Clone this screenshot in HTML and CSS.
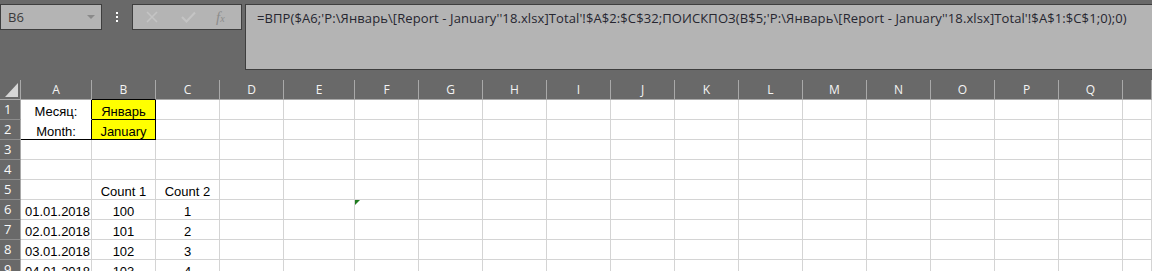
FILE: index.html
```html
<!DOCTYPE html>
<html lang="ru">
<head>
    <meta charset="UTF-8">
    <title>Excel - B6</title>
    <link rel="stylesheet" href="styles.css">
</head>
<body>
    <div class="toolbar">
        <div class="namebox">
            <span>B6</span>
            <span class="arrow"></span>
        </div>
        <div class="dots"><i></i><i></i><i></i></div>
        <div class="fxbox">
            <svg class="ico" width="14" height="12" viewBox="0 0 14 12"><path d="M2 1 L12 11 M12 1 L2 11" stroke="#c4c4c4" stroke-width="1.6" fill="none"/></svg>
            <svg class="ico" width="15" height="12" viewBox="0 0 15 12"><path d="M1 6 L5.5 10.5 L14 1.5" stroke="#c4c4c4" stroke-width="2" fill="none"/></svg>
            <span class="fx">f<sub>x</sub></span>
        </div>
        <div class="formula">=ВПР($A6;'P:\Январь\[Report - January''18.xlsx]Total'!$A$2:$C$32;ПОИСКПОЗ(B$5;'P:\Январь\[Report - January''18.xlsx]Total'!$A$1:$C$1;0);0)</div>
    </div>

    <div class="sheet">
        <div class="row head">
            <div class="corner"><svg width="13" height="14" viewBox="0 0 13 14"><polygon points="13,0 13,14 0,14" fill="#d6d6d6"/></svg></div>
            <div class="ch">A</div><div class="ch top-black">B</div><div class="ch">C</div><div class="ch">D</div><div class="ch">E</div>
            <div class="ch">F</div><div class="ch">G</div><div class="ch">H</div><div class="ch">I</div><div class="ch">J</div><div class="ch">K</div>
            <div class="ch">L</div><div class="ch">M</div><div class="ch">N</div><div class="ch">O</div><div class="ch">P</div><div class="ch">Q</div>
            <div class="ch"></div>
        </div>

        <div class="row">
            <div class="rh">1</div>
            <div class="c center label a1">Месяц:</div>
            <div class="c center month">Январь</div>
            <div class="c"></div><div class="c"></div><div class="c"></div><div class="c"></div><div class="c"></div><div class="c"></div>
            <div class="c"></div><div class="c"></div><div class="c"></div><div class="c"></div><div class="c"></div><div class="c"></div>
            <div class="c"></div><div class="c"></div><div class="c"></div><div class="c"></div>
        </div>
        <div class="row">
            <div class="rh">2</div>
            <div class="c center label a2">Month:</div>
            <div class="c center month">January</div>
            <div class="c"></div><div class="c"></div><div class="c"></div><div class="c"></div><div class="c"></div><div class="c"></div>
            <div class="c"></div><div class="c"></div><div class="c"></div><div class="c"></div><div class="c"></div><div class="c"></div>
            <div class="c"></div><div class="c"></div><div class="c"></div><div class="c"></div>
        </div>
        <div class="row">
            <div class="rh">3</div>
            <div class="c"></div><div class="c"></div><div class="c"></div><div class="c"></div><div class="c"></div><div class="c"></div>
            <div class="c"></div><div class="c"></div><div class="c"></div><div class="c"></div><div class="c"></div><div class="c"></div>
            <div class="c"></div><div class="c"></div><div class="c"></div><div class="c"></div><div class="c"></div><div class="c"></div>
        </div>
        <div class="row">
            <div class="rh">4</div>
            <div class="c"></div><div class="c"></div><div class="c"></div><div class="c"></div><div class="c"></div><div class="c"></div>
            <div class="c"></div><div class="c"></div><div class="c"></div><div class="c"></div><div class="c"></div><div class="c"></div>
            <div class="c"></div><div class="c"></div><div class="c"></div><div class="c"></div><div class="c"></div><div class="c"></div>
        </div>
        <div class="row">
            <div class="rh">5</div>
            <div class="c"></div>
            <div class="c center">Count 1</div>
            <div class="c center">Count 2</div>
            <div class="c"></div><div class="c"></div><div class="c"></div><div class="c"></div><div class="c"></div>
            <div class="c"></div><div class="c"></div><div class="c"></div><div class="c"></div><div class="c"></div><div class="c"></div>
            <div class="c"></div><div class="c"></div><div class="c"></div><div class="c"></div>
        </div>
        <div class="row">
            <div class="rh">6</div>
            <div class="c">01.01.2018</div>
            <div class="c center">100</div>
            <div class="c center">1</div>
            <div class="c"></div><div class="c"></div><div class="c flag"></div><div class="c"></div><div class="c"></div>
            <div class="c"></div><div class="c"></div><div class="c"></div><div class="c"></div><div class="c"></div><div class="c"></div>
            <div class="c"></div><div class="c"></div><div class="c"></div><div class="c"></div>
        </div>
        <div class="row">
            <div class="rh">7</div>
            <div class="c">02.01.2018</div>
            <div class="c center">101</div>
            <div class="c center">2</div>
            <div class="c"></div><div class="c"></div><div class="c"></div><div class="c"></div><div class="c"></div>
            <div class="c"></div><div class="c"></div><div class="c"></div><div class="c"></div><div class="c"></div><div class="c"></div>
            <div class="c"></div><div class="c"></div><div class="c"></div><div class="c"></div>
        </div>
        <div class="row">
            <div class="rh">8</div>
            <div class="c">03.01.2018</div>
            <div class="c center">102</div>
            <div class="c center">3</div>
            <div class="c"></div><div class="c"></div><div class="c"></div><div class="c"></div><div class="c"></div>
            <div class="c"></div><div class="c"></div><div class="c"></div><div class="c"></div><div class="c"></div><div class="c"></div>
            <div class="c"></div><div class="c"></div><div class="c"></div><div class="c"></div>
        </div>
        <div class="row">
            <div class="rh">9</div>
            <div class="c">04.01.2018</div>
            <div class="c center">103</div>
            <div class="c center">4</div>
            <div class="c"></div><div class="c"></div><div class="c"></div><div class="c"></div><div class="c"></div>
            <div class="c"></div><div class="c"></div><div class="c"></div><div class="c"></div><div class="c"></div><div class="c"></div>
            <div class="c"></div><div class="c"></div><div class="c"></div><div class="c"></div>
        </div>
    </div>
</body>
</html>
```

FILE: styles.css
```css
body {
    margin: 0;
    background: #fff;
    overflow: hidden;
    font-family: "Liberation Sans", Arial, sans-serif;
}

/* formula bar */
.toolbar {
    display: flex;
    align-items: flex-start;
    height: 80px;
    padding-top: 4px;
    box-sizing: border-box;
    background-color: #696969;
}

.namebox {
    display: flex;
    align-items: center;
    justify-content: space-between;
    width: 102px;
    height: 26px;
    padding: 0 6px 0 7px;
    box-sizing: border-box;
    border: 1px solid #3e3e3e;
    background-color: #b4b4b4;
    font-family: "Open Sans", sans-serif;
    font-size: 13px;
    color: #3a3a3a;
}

.arrow {
    width: 0;
    height: 0;
    border-left: 4px solid transparent;
    border-right: 4px solid transparent;
    border-top: 4px solid #8a8a8a;
}

.dots {
    display: flex;
    flex-direction: column;
    align-items: center;
    gap: 2px;
    width: 30px;
    padding-top: 8px;
}

.dots i {
    width: 2px;
    height: 2px;
    background: #fff;
}

.fxbox {
    display: flex;
    align-items: center;
    width: 110px;
    height: 26px;
    box-sizing: border-box;
    border: 1px solid #3e3e3e;
    background-color: #b4b4b4;
    padding-left: 12px;
}

.ico {
    margin-right: 22px;
}

.fx {
    font-family: "Liberation Serif", serif;
    font-style: italic;
    font-size: 15px;
    color: #8c8c8c;
    margin-left: -2px;
}

.fx sub {
    font-size: 10px;
    vertical-align: 0;
}

.formula {
    flex: 1;
    height: 66px;
    margin-left: 3px;
    padding: 4px 0 0 11px;
    box-sizing: border-box;
    border: 1px solid #3e3e3e;
    border-right: none;
    background-color: #b4b4b4;
    font-family: "Open Sans", sans-serif;
    font-size: 13px;
    letter-spacing: 0.1px;
    color: #262630;
    white-space: nowrap;
    overflow: hidden;
}

/* grid */
.row {
    display: grid;
    grid-template-columns: 21px 71px 64px 64px 64px 71px repeat(12, 64px) 29px;
    height: 20px;
}

.row > div {
    box-sizing: border-box;
    border-right: 1px solid #d4d4d4;
    border-bottom: 1px solid #d4d4d4;
    overflow: hidden;
    white-space: nowrap;
}

.head > div {
    background-color: #696969;
    border-right-color: #a9a9a9;
    border-bottom-color: #a9a9a9;
}

.corner {
    padding: 3px 0 0 5px;
}

.corner svg {
    display: block;
}

.ch {
    text-align: center;
    font-family: "Open Sans", sans-serif;
    font-size: 12px;
    line-height: 19px;
    color: #f4f4f4;
}

.head .top-black {
    border-bottom-color: #000;
}

.row > .rh {
    background-color: #696969;
    border-right-color: #a9a9a9;
    border-bottom-color: #8c8c8c;
    color: #fafafa;
    font-family: "Open Sans", sans-serif;
    font-size: 13px;
    line-height: 19px;
    padding-left: 4px;
}

.c {
    padding: 4px 4px 0;
    font-size: 13px;
    line-height: 15px;
    color: #000;
}

.center {
    text-align: center;
}

.row > .a1 {
    border-right-color: #000;
    border-bottom-color: #fff;
}

.row > .a2 {
    border-right-color: #000;
    border-bottom-color: #000;
}

.row > .month {
    background-color: #ffff00;
    border-right-color: #000;
    border-bottom-color: #000;
}

.flag {
    position: relative;
}

.flag::before {
    content: "";
    position: absolute;
    left: 0;
    top: 0;
    border-top: 5px solid #1e7b1e;
    border-right: 5px solid transparent;
}
```
